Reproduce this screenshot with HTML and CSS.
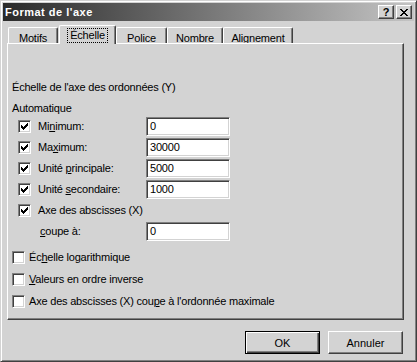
FILE: index.html
```html
<html><head>
<meta charset="utf-8">
<title>Format de l'axe</title>
<link rel="stylesheet" href="styles.css">
</head>
<body>
<div class="window">
  <div class="titlebar">
    <span class="title">Format de l'axe</span>
    <div class="caption">
      <span class="cap-btn help">?</span>
      <span class="cap-btn"><svg width="8" height="7" viewBox="0 0 8 7" shape-rendering="crispEdges"><path d="M0 0h2v1h-2zM6 0h2v1h-2zM1 1h2v1h-2zM5 1h2v1h-2zM2 2h4v1h-4zM3 3h2v1h-2zM2 4h4v1h-4zM1 5h2v1h-2zM5 5h2v1h-2zM0 6h2v1h-2zM6 6h2v1h-2z" fill="#000"/></svg></span>
    </div>
  </div>

  <div class="tabs">
    <div class="tab t-motifs">Motifs</div>
    <div class="tab active t-echelle"><span class="focus">Échelle</span></div>
    <div class="tab t-police">Police</div>
    <div class="tab t-nombre">Nombre</div>
    <div class="tab t-align">Alignement</div>
  </div>

  <div class="panel">
    <div class="heading">Échelle de l'axe des ordonnées (Y)</div>
    <div class="group-label">Automatique</div>
    <div class="auto">
      <span class="check on"></span><span>Mi<u>n</u>imum:</span><span class="field">0</span>
      <span class="check on"></span><span>Ma<u>x</u>imum:</span><span class="field">30000</span>
      <span class="check on"></span><span>Unité <u>p</u>rincipale:</span><span class="field">5000</span>
      <span class="check on"></span><span>Unité <u>s</u>econdaire:</span><span class="field">1000</span>
      <span class="check on"></span><span class="wide">Axe des abscisses (X)</span>
      <span></span><span class="indent"><u>c</u>oupe à:</span><span class="field">0</span>
    </div>
    <div class="options">
      <div class="opt"><span class="check"></span><span>Éc<u>h</u>elle logarithmique</span></div>
      <div class="opt"><span class="check"></span><span><u>V</u>aleurs en ordre inverse</span></div>
      <div class="opt"><span class="check"></span><span>Axe des abscisses (X) cou<u>p</u>e à l'ordonnée maximale</span></div>
    </div>
  </div>

  <div class="footer">
    <button class="btn default">OK</button>
    <button class="btn">Annuler</button>
  </div>
</div>
</body></html>
```

FILE: styles.css
```css
body { margin: 0; background: #d3d3d3; font: 11px "Liberation Sans", Arial, sans-serif; color: #000; letter-spacing: -0.2px; }

.window {
  width: 417px; height: 362px; box-sizing: border-box;
  border: 1px solid; border-color: #d3d3d3 #404040 #404040 #d3d3d3;
  box-shadow: inset 1px 1px #fff, inset -1px -1px #808080;
  padding: 2px; background: #d3d3d3;
  display: flex; flex-direction: column;
}

/* title bar */
.titlebar {
  height: 18px; flex: none; display: flex; align-items: center;
  background: linear-gradient(to right, #2a2a2a, #c4c4c4);
  padding-left: 2px;
}
.title { color: #fff; font-weight: bold; flex: 1; letter-spacing: 0.5px; }
.caption { display: flex; gap: 2px; margin-right: 2px; }
.cap-btn {
  width: 16px; height: 14px; box-sizing: border-box;
  background: #d3d3d3; border: 1px solid; border-color: #fff #404040 #404040 #fff;
  box-shadow: inset -1px -1px #808080;
  display: flex; align-items: center; justify-content: center;
}
.help { font-weight: bold; font-size: 11px; line-height: 12px; }

/* tabs */
.tabs { display: flex; align-items: flex-end; height: 18px; margin: 4px 0 0 5px; line-height: 12px; flex: none; }
.tab {
  height: 16px; box-sizing: border-box; padding-top: 4px; text-align: center;
  border: 1px solid; border-bottom: none; border-color: #fff #404040 #fff #fff;
  border-radius: 2px 2px 0 0;
  box-shadow: inset -1px 0 #808080;
  background: #d3d3d3;
}
.tab.active {
  height: 19px; margin-bottom: -1px; padding-top: 3px;
  position: relative; z-index: 1;
}
.t-motifs { width: 50px; margin-right: 1px; }
.t-echelle { width: 57px; }
.t-police { width: 51px; }
.t-nombre { width: 56px; }
.t-align { width: 70px; }
.focus { outline: 1px dotted #000; padding: 0 2px 1px; }

/* page */
.panel {
  height: 277px; box-sizing: border-box; flex: none;
  margin: 0 10px 0 4px; padding: 37px 0 0 4px;
  border: 1px solid; border-color: #fff #404040 #404040 #fff;
  box-shadow: inset -1px -1px #808080;
  line-height: 13px;
}
.group-label { margin-top: 8px; }

.auto {
  display: grid; grid-template-columns: 20px 108px 84px; grid-auto-rows: 21px;
  align-items: center; margin: 1px 0 0 6px;
}
.wide { grid-column: span 2; }
.indent { padding-left: 2px; }

.check {
  width: 13px; height: 13px; box-sizing: border-box; display: inline-block;
  border: 1px solid; border-color: #808080 #fff #fff #808080;
  box-shadow: inset 1px 1px #404040, inset -1px -1px #d3d3d3;
  background: #fff;
}
.check.on {
  background: #fff url("data:image/svg+xml,%3Csvg xmlns='http://www.w3.org/2000/svg' width='7' height='7' shape-rendering='crispEdges'%3E%3Cpath d='M0 2h1v3h-1zM1 3h1v3h-1zM2 4h1v3h-1zM3 3h1v3h-1zM4 2h1v3h-1zM5 1h1v3h-1zM6 0h1v3h-1z'/%3E%3C/svg%3E") no-repeat 2px 2px;
}

.field {
  height: 19px; box-sizing: border-box; background: #fff;
  border: 1px solid; border-color: #808080 #fff #fff #808080;
  box-shadow: inset 1px 1px #404040, inset -1px -1px #d3d3d3;
  padding-left: 3px; line-height: 17px;
}

.options { margin-top: 4px; }
.opt { height: 22px; display: flex; align-items: center; gap: 4px; }

/* buttons */
.footer { display: flex; justify-content: flex-end; gap: 8px; margin: 11px 11px 0 0; }
.btn {
  width: 75px; height: 23px; box-sizing: border-box; padding: 0;
  font: inherit; color: #000; background: #d3d3d3;
  border: 1px solid; border-color: #fff #404040 #404040 #fff;
  box-shadow: inset -1px -1px #808080;
}
.btn.default {
  border-color: #000;
  box-shadow: inset 1px 1px #fff, inset -1px -1px #404040, inset -2px -2px #808080;
}
```
